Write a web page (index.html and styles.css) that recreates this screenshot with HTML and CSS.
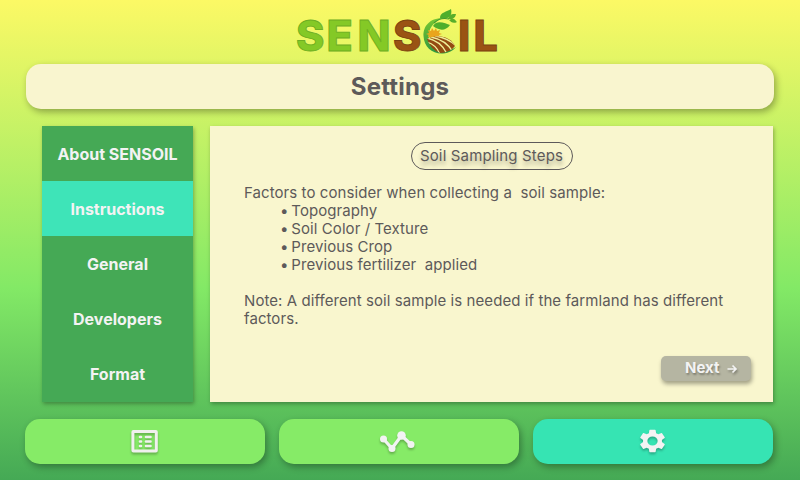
FILE: index.html
```
<!DOCTYPE html>
<html lang="en">
<head>
<meta charset="utf-8">
<title>SENSOIL Settings</title>
<link rel="stylesheet" href="styles.css">
</head>
<body>
<div class="screen">
  <header class="brand">
    <svg class="logo" width="210" height="56" viewBox="294 4 210 56">
      <defs>
        <linearGradient id="leaf" x1="0" y1="0" x2="0" y2="1"><stop offset="0" stop-color="#78c832"/><stop offset="1" stop-color="#2f9640"/></linearGradient>
        <clipPath id="field"><path d="M427 39C438 33 451 37 455 46Q450 53 440 53Q431 50 427 39Z"/></clipPath>
      </defs>
      <text class="word green" y="51" x="296 326.500 357.500" textLength="94" lengthAdjust="spacing">SEN</text>
      <text class="word brown" y="51" x="393">S</text>
      <text class="word brown" y="51" x="458 473.500">IL</text>
      <path d="M443 18C429 18 423 27 423.500 36C424 47 432 54 443 53.500C449 53 454 50 456 47C450 51 442 51.500 436 48C425 42 426 24 443 18Z" fill="url(#leaf)"/>
      <path d="M428 37l1-2-3-1 3-1-1-3 3 1 1-3 2 3 2-3 1 3 3-1-1 3 3 1-3 1 1 3Z" fill="#e9a51c"/>
      <g clip-path="url(#field)">
        <path d="M424 34H460V56H424Z" fill="#944b12"/>
        <path d="M427 38Q441 41 447 54M431 37Q446 40 453 52M427 42Q437 45 440 55M435 36Q449 38 457 47" fill="none" stroke="#eff09a" stroke-width="1.300"/>
      </g>
      <path d="M433 26C437 19 446 24 450 25C445 32 438 30 433 26Z" fill="#4fae2c"/>
      <path d="M440 18C440 12 447 12 451 9C453 17 447 20 440 18Z" fill="#4fae2c"/>
      <path d="M448 19C450 13 453 14 456 14C455 19 452 19 448 19ZM449 20C454 17 455 20 457 22C453 24 451 22 449 20Z" fill="#59ae2b"/>
      <path d="M434 23Q440 17 449 19" fill="none" stroke="#409931" stroke-width="1.200"/>
    </svg>
  </header>
  <h1 class="title">Settings</h1>
  <main class="content">
    <nav class="menu">
      <a class="item">About SENSOIL</a>
      <a class="item active">Instructions</a>
      <a class="item">General</a>
      <a class="item">Developers</a>
      <a class="item">Format</a>
    </nav>
    <section class="panel">
      <h2 class="pill">Soil Sampling Steps</h2>
      <div class="copy">
        <p>Factors to consider when collecting a&nbsp; soil sample:</p>
        <ul>
          <li>Topography</li>
          <li>Soil Color / Texture</li>
          <li>Previous Crop</li>
          <li>Previous fertilizer&nbsp; applied</li>
        </ul>
        <p>Note: A different soil sample is needed if the farmland has different factors.</p>
      </div>
      <button class="next"><span>Next</span>
        <svg width="12" height="12" viewBox="0 0 12 12"><path d="M1.500 7H10M6.500 3.500L10 7L6.500 10.500" fill="none" stroke="#f3f3f3" stroke-width="1.700"/></svg>
      </button>
    </section>
  </main>
  <footer class="tabs">
    <a class="tab">
      <svg class="icon" width="28" height="24" viewBox="0 0 28 24"><rect x="1.900" y="1.600" width="23.400" height="19.500" rx=".5" fill="none" stroke="#f0f0ee" stroke-width="3"/><path d="M9 7H10M9 11.500H10M9 16H10M15 7H19.500M15 11.500H19.500M15 16H19.500" stroke="#f0f0ee" stroke-width="2.600" stroke-linecap="round"/></svg>
    </a>
    <a class="tab">
      <svg class="icon chart" width="36" height="24" viewBox="0 0 36 24"><path d="M4.500 9L13 18.500L22.500 5.500L32 14.500" fill="none" stroke="#f3f3f3" stroke-width="3.200"/><g fill="#f3f3f3"><circle cx="4.500" cy="9" r="3.500"/><circle cx="13" cy="18.500" r="3.500"/><circle cx="22.500" cy="5.500" r="4.300"/><circle cx="32" cy="14.500" r="3.500"/></g></svg>
    </a>
    <a class="tab active">
      <svg class="icon gear" width="29" height="26" viewBox="1 1 22 22" preserveAspectRatio="none"><path fill="#f3f3f3" d="M19.140 12.940c.04-.3.060-.61.060-.94 0-.32-.02-.64-.07-.94l2.030-1.580a.49.49 0 0 0 .12-.61l-1.920-3.320a.488.488 0 0 0-.59-.22l-2.390.96c-.5-.38-1.030-.7-1.620-.94l-.36-2.540a.484.484 0 0 0-.48-.41h-3.840c-.24 0-.43.17-.47.41l-.36 2.540c-.59.240-1.130.57-1.620.94l-2.390-.96c-.22-.08-.47 0-.59.220L2.740 8.870c-.12.210-.08.470.12.610l2.030 1.580c-.05.300-.09.630-.09.940s.02.640.07.940l-2.030 1.580a.49.49 0 0 0-.12.610l1.920 3.320c.12.220.37.290.59.220l2.390-.96c.5.380 1.030.7 1.620.94l.36 2.540c.05.240.24.410.48.410h3.840c.24 0 .44-.17.470-.41l.36-2.540c.59-.24 1.130-.56 1.620-.94l2.390.96c.22.080.47 0 .59-.22l1.920-3.320c.12-.22.070-.47-.12-.61l-2.010-1.580zM12 15.900A3.900 3.900 0 1 1 12 8.100a3.900 3.900 0 0 1 0 7.800z"/></svg>
    </a>
  </footer>
</div>
</body>
</html>
```
FILE: styles.css
```
* { box-sizing: border-box; }
body { margin: 0; font-family: Inter, "Liberation Sans", sans-serif; color: #5d5a5a; }
.screen {
  width: 800px; height: 480px; overflow: hidden;
  display: flex; flex-direction: column;
  background: linear-gradient(180deg, #fcf965 0%, #83e966 60%, #45a955 100%);
}
.brand { height: 64px; padding-top: 4px; display: flex; justify-content: center; }
.logo { display: block; margin-right: 2px; }
.word { font: 800 43px Inter, sans-serif; }
.green { fill: #84c926; stroke: #6dae22; stroke-width: .9; }
.brown { fill: #9a5313; stroke: #7b4310; stroke-width: .9; }
.title {
  margin: 0 26px; height: 45px; line-height: 45px; border-radius: 15px;
  background: #f9f5cf; box-shadow: 2px 3px 7px rgba(0, 0, 0, .32);
  text-align: center; font-size: 24px; font-weight: 700; letter-spacing: .2px;
}
.content { display: flex; gap: 17px; height: 276px; margin: 17px 27px 0 42px; }
.menu { width: 151px; display: flex; flex-direction: column; background: #45a955; box-shadow: 1px 2px 4px rgba(0, 0, 0, .3); }
.item { flex: 1; display: flex; align-items: center; justify-content: center; color: #f3f3f3; font-size: 16px; font-weight: 700; }
.item.active { background: #3ee4b8; }
.panel {
  flex: 1; padding: 16px 22px 0 34px; display: flex; flex-direction: column;
  background: #f9f6ce; box-shadow: 1px 2px 4px rgba(0, 0, 0, .3);
}
.pill {
  align-self: center; margin: 0 12px 0 0; width: 162px; height: 28px; line-height: 26px;
  border: 1px solid #5d5a5a; border-radius: 14px; text-align: center; white-space: nowrap;
  font-size: 15px; font-weight: 400; letter-spacing: .15px; text-shadow: 0 4px 4px rgba(0, 0, 0, .3);
}
.copy { margin-top: 14px; height: 144px; font-size: 15px; line-height: 18px; letter-spacing: .075px; }
.copy p { margin: 0; }
.copy ul { margin: 0 0 18px; padding: 0 0 0 36px; list-style: none; }
.copy li::before { content: "• "; word-spacing: -1.5px; }
.next {
  align-self: flex-end; margin-top: 28px; width: 90px; height: 25px; padding: 0 13px 2px 24px;
  display: flex; align-items: center; justify-content: space-between;
  border: 0; border-radius: 5px; background: #b5b5a2; color: #f3f3f3;
  box-shadow: 1px 3px 4px rgba(0, 0, 0, .35);
  font: 700 15px Inter, sans-serif; text-shadow: 1px 2px 2px rgba(0, 0, 0, .3);
}
.next svg { filter: drop-shadow(1px 2px 1px rgba(0, 0, 0, .3)); }
.tabs { display: flex; gap: 14px; margin: 17px 27px 0 25px; height: 45px; }
.tab { flex: 1; display: flex; align-items: center; justify-content: center; border-radius: 15px; background: #86eb67; box-shadow: 2px 3px 7px rgba(0, 0, 0, .32); }
.tab.active { background: #36e4b3; }
.icon { filter: drop-shadow(0 2px 1px rgba(0, 0, 0, .25)); }
.chart { margin-right: 4px; }
.gear { margin: 0 2px 1px 0; }
```
